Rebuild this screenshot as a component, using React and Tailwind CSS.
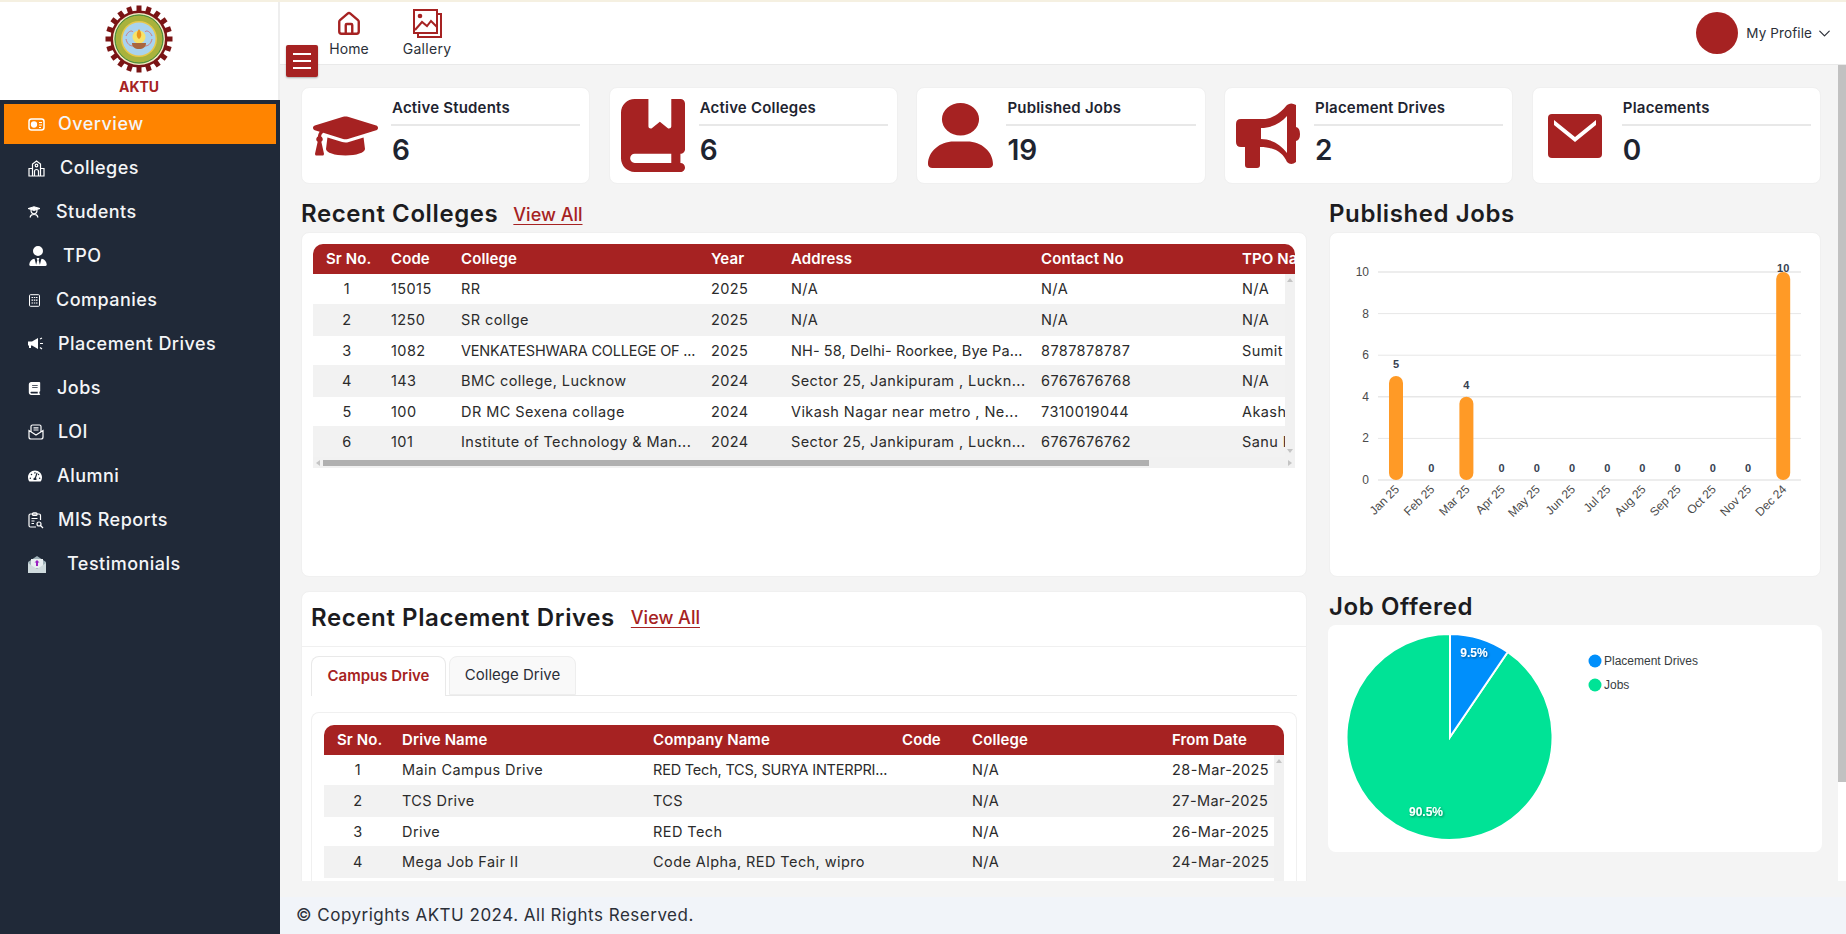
import React from "react";
import { FaGraduationCap, FaTachometerAlt } from "react-icons/fa";
import { FaBookBookmark, FaUser, FaUserTie, FaBook } from "react-icons/fa6";
import { ChevronDown, House } from "lucide-react";

const Logo = () => {
  const teeth = Array.from({ length: 20 }, (_, i) => i * 18);
  return (
    <svg width="68" height="68" viewBox="-34 -34 68 68">
      {teeth.map((a) => (
        <rect key={a} x="-2.500" y="-33.500" width="5" height="7" fill="#7a1414" transform={`rotate(${a})`} />
      ))}
      <circle r="28.500" fill="#7a1414" />
      <circle r="26" fill="#efe9c8" />
      <circle r="24.500" fill="#a9b23c" />
      <circle r="24" fill="none" stroke="#3f8a3f" strokeWidth="1" />
      <circle r="18" fill="#e8c84a" />
      <circle r="16.500" fill="#a9d3ee" />
      <path d="M-13 -3c2-5 6-6 7-4M13 -3c-2-5-6-6-7-4M-13 0c1 5 4 7 7 7M13 0c-1 5-4 7-7 7" stroke="#d07a7a" fill="none" strokeWidth="1" />
      <circle cy="-2" r="6.500" fill="#f7e36a" />
      <path d="M0 -10c3 4 3 8 0 10c-3-2-3-6 0-10z" fill="#e8941c" />
      <path d="M-7 4h14c0 4-3 6-7 6s-7-2-7-6z" fill="#a9663d" />
    </svg>
  );
};

const IdIcon = () => (
  <svg width="17" height="13" viewBox="0 0 17 13" fill="none" stroke="white" strokeWidth="1.5">
    <rect x="1" y="1" width="15" height="11" rx="2.500" />
    <circle cx="6" cy="6.500" r="2.400" fill="white" />
    <path d="M11 4.500h3M11 7h3M11 9.500h2" strokeWidth="1.200" />
  </svg>
);
const SchoolIcon = () => (
  <svg width="17" height="17" viewBox="0 0 17 17" fill="none" stroke="white" strokeWidth="1.200">
    <path d="M1 16V8.500h3.500V4L8.500 1l4 3v4.500H16V16z" />
    <circle cx="8.500" cy="5.500" r="1.300" />
    <path d="M6.500 16v-4.500a2 2 0 0 1 4 0V16M4.500 8.500V16M12.500 8.500V16" />
  </svg>
);
const StudentIcon = () => (
  <svg width="12" height="12" viewBox="0 0 12 12" fill="none" stroke="white" strokeWidth="1.200">
    <path d="M0.500 2.500L6 0.800l5.500 1.700L6 4.300z" fill="white" />
    <path d="M3 4c0 5 6 5 6 0M2 11.500c1-3 2-3 4-3s3 0 4 3" />
  </svg>
);
const CompanyIcon = () => (
  <svg width="13" height="13" viewBox="0 0 13 13" fill="none" stroke="white" strokeWidth="1">
    <rect x="1.500" y="0.700" width="10" height="11.600" rx="1" />
    <path d="M3.500 3.500h1.500M5.800 3.500h1.500M8 3.500h1.500M3.500 6.200h1.500M5.800 6.200h1.500M8 6.200h1.500M3.500 9h1.500M5.800 9h1.500M8 9h1.500" strokeWidth="1.200" />
  </svg>
);
const MegaSmall = () => (
  <svg width="18" height="14" viewBox="0 0 18 14" fill="white">
    <path d="M0 4.500h4L10 1v11L4 8.500H3V11H1V8.500H0z" />
    <path d="M12 2l2-1M12 6.500h3M12 10.500l2 1.500" stroke="white" strokeWidth="1.200" />
  </svg>
);
const LoiIcon = () => (
  <svg width="16" height="16" viewBox="0 0 16 16" fill="none" stroke="white" strokeWidth="1.200">
    <path d="M1 6.500V13a2 2 0 0 0 2 2h10a2 2 0 0 0 2-2V6.500L8 11z" />
    <path d="M3 8V2.500A1.500 1.500 0 0 1 4.500 1h7A1.500 1.500 0 0 1 13 2.500V8" />
    <path d="M5.500 3.800h5M5.500 6h5" />
  </svg>
);
const MisIcon = () => (
  <svg width="16" height="17" viewBox="0 0 16 17" fill="none" stroke="white" strokeWidth="1.200">
    <path d="M8 15H2.500A1.500 1.500 0 0 1 1 13.500v-10A1.500 1.500 0 0 1 2.500 2H11a1.500 1.500 0 0 1 1.500 1.500V8" />
    <rect x="4.500" y="0.800" width="4.500" height="2.600" rx="1" />
    <path d="M3.500 6.500h6M3.500 9h3M3.500 11.500h2.500" />
    <circle cx="11" cy="12" r="2" />
    <path d="M12.500 13.500l2.500 2.500" />
  </svg>
);
const TestiIcon = () => (
  <svg width="18" height="17" viewBox="0 0 18 17">
    <path d="M0 6L9 0l9 6v11H0z" fill="#9fb1b8" />
    <rect x="3" y="3" width="12" height="9" fill="#e8eef0" />
    <path d="M9 4l2.500 2.500H10V10H8V6.500H6.500z" fill="#9b1fc1" />
    <path d="M0 7l9 6 9-6v10H0z" fill="#cfdadd" />
  </svg>
);

const Gallery = () => (
  <svg width="29" height="29" viewBox="0 0 29 29" fill="none" stroke="#a62222" strokeWidth="2">
    <rect x="1" y="1" width="23" height="23" />
    <path d="M5 25v3h23V5h-3" />
    <circle cx="7" cy="7" r="2.300" fill="#a62222" stroke="none" />
    <path d="M2 21l7-8 5 4 4-5 6 6" />
  </svg>
);

const Bullhorn = () => (
  <svg width="64" height="65" viewBox="0 0 64 65" fill="#a62222">
    <path fillRule="evenodd" d="M5 16H27C38 16 46 8 51 2Q55-1 60 2V59Q55 63 51 59C47 50 39 44 24 44V62Q24 65 21 65H12Q9 65 9 62V44H5Q0 44 0 39V21Q0 16 5 16ZM25 25V36C36 36 45 42 51 50V13C45 20 36 25 25 25Z" />
    <path d="M60 24Q64 25 64 31Q64 37 60 38Z" />
  </svg>
);

const Envelope = () => (
  <svg width="54" height="44" viewBox="0 0 54 44">
    <rect width="54" height="44" rx="4" fill="#a62222" />
    <path d="M6 6L27 23L48 6V11L27 28L6 11Z" fill="white" />
  </svg>
);

const nav = [
  { label: "Overview", icon: <IdIcon />, text: "ml-[13px]", active: true },
  { label: "Colleges", icon: <SchoolIcon />, text: "ml-[15px]" },
  { label: "Students", icon: <StudentIcon />, text: "ml-[16px]" },
  { label: "TPO", icon: <FaUserTie size={20} color="white" />, text: "ml-[15px]" },
  { label: "Companies", icon: <CompanyIcon />, text: "ml-[15px]" },
  { label: "Placement Drives", icon: <MegaSmall />, text: "ml-[12px]" },
  { label: "Jobs", icon: <FaBook size={13} color="white" />, text: "ml-[16px]" },
  { label: "LOI", icon: <LoiIcon />, text: "ml-[14px]" },
  { label: "Alumni", icon: <FaTachometerAlt size={14} color="white" />, text: "ml-[15px]" },
  { label: "MIS Reports", icon: <MisIcon />, text: "ml-[14px]" },
  { label: "Testimonials", icon: <TestiIcon />, text: "ml-[21px]" },
];

const stats = [
  { label: "Active Students", value: "6", icon: <FaGraduationCap color="#a62222" preserveAspectRatio="none" className="h-[52px] w-[65px]" />, box: "w-[89px] pl-[11px]" },
  { label: "Active Colleges", value: "6", icon: <FaBookBookmark color="#a62222" preserveAspectRatio="none" className="h-[73px] w-[64px]" />, box: "w-[89px] pl-[11px]" },
  { label: "Published Jobs", value: "19", icon: <FaUser color="#a62222" preserveAspectRatio="none" className="h-[65px] w-[65px]" />, box: "w-[89px] pl-[11px]" },
  { label: "Placement Drives", value: "2", icon: <Bullhorn />, box: "w-[89px] pl-[11px]" },
  { label: "Placements", value: "0", icon: <Envelope />, box: "w-[89px] pl-[15px]" },
];

const colleges = [
  ["1", "15015", "RR", "2025", "N/A", "N/A", "N/A"],
  ["2", "1250", "SR collge", "2025", "N/A", "N/A", "N/A"],
  ["3", "1082", "VENKATESHWARA COLLEGE OF ...", "2025", "NH- 58, Delhi- Roorkee, Bye Pa...", "8787878787", "Sumit"],
  ["4", "143", "BMC college, Lucknow", "2024", "Sector 25, Jankipuram , Luckn...", "6767676768", "N/A"],
  ["5", "100", "DR MC Sexena collage", "2024", "Vikash Nagar near metro , Ne...", "7310019044", "Akash"],
  ["6", "101", "Institute of Technology & Man...", "2024", "Sector 25, Jankipuram , Luckn...", "6767676762", "Sanu Kumar"],
];

const drives = [
  ["1", "Main Campus Drive", "RED Tech, TCS, SURYA INTERPRI...", "", "N/A", "28-Mar-2025"],
  ["2", "TCS Drive", "TCS", "", "N/A", "27-Mar-2025"],
  ["3", "Drive", "RED Tech", "", "N/A", "26-Mar-2025"],
  ["4", "Mega Job Fair II", "Code Alpha, RED Tech, wipro", "", "N/A", "24-Mar-2025"],
];

const rowH = [
  "h-[30px]",
  "h-[32px] bg-[#f2f2f2]",
  "h-[29px] [&>td]:pt-[1px]",
  "h-[32px] bg-[#f2f2f2]",
  "h-[29px] [&>td]:pt-[1px]",
  "h-[31px] bg-[#f2f2f2]",
];

const trackingFor = (c) => {
  if (c.startsWith("VENKATESHWARA") || c.startsWith("RED Tech, TCS")) return "tracking-[-0.2px]";
  if (c.startsWith("NH- 58")) return "tracking-[0.1px]";
  return "tracking-[0.42px]";
};

const DataTable = ({ cols, head, rows, width }) => (
  <table className={`table-fixed border-collapse ${width}`}>
    <colgroup>
      {cols.map((c, i) => (
        <col key={i} className={c} />
      ))}
    </colgroup>
    <thead>
      <tr className="h-[30px] bg-[#a62222] text-white">
        {head.map((h, i) => (
          <th key={i} className="overflow-hidden whitespace-nowrap pl-[13px] text-left text-[15px] font-semibold tracking-[0.1px]">
            {h}
          </th>
        ))}
      </tr>
    </thead>
    <tbody>
      {rows.map((r, ri) => (
        <tr key={ri} className={rowH[ri]}>
          {r.map((c, i) => (
            <td
              key={i}
              className={`overflow-hidden whitespace-nowrap text-[14.500px] font-normal text-[#2b2b2b] ${trackingFor(c)} ${i === 0 ? "pl-[3px] text-center" : "pl-[13px]"}`}
            >
              {c}
            </td>
          ))}
        </tr>
      ))}
    </tbody>
  </table>
);

const Up = () => (
  <svg width="6" height="4" viewBox="0 0 6 4"><path d="M3 0l3 4H0z" fill="#c4c4c4" /></svg>
);
const Down = () => (
  <svg width="6" height="4" viewBox="0 0 6 4"><path d="M3 4L0 0h6z" fill="#c4c4c4" /></svg>
);

const months = ["Jan 25", "Feb 25", "Mar 25", "Apr 25", "May 25", "Jun 25", "Jul 25", "Aug 25", "Sep 25", "Oct 25", "Nov 25", "Dec 24"];
const values = [5, 0, 4, 0, 0, 0, 0, 0, 0, 0, 0, 10];

const BarChart = () => (
  <svg width="492" height="345" viewBox="0 0 492 345" className="font-['Liberation_Sans',sans-serif]">
    {[0, 2, 4, 6, 8, 10].map((v) => {
      const y = 247 - v * 20.8;
      return (
        <g key={v}>
          <line x1="48" x2="471" y1={y} y2={y} stroke="#e7e7e7" strokeWidth={v === 0 || v === 10 || v === 4 ? 1.5 : 1} />
          <text x="39" y={y + 4} textAnchor="end" fontSize="12" fill="#4b4b4b">{v}</text>
        </g>
      );
    })}
    {values.map((v, i) => {
      const x = 66 + i * 35.2;
      const h = v * 20.8;
      return (
        <g key={i}>
          {v > 0 && <rect x={x - 7} y={247 - h} width="14" height={h} rx="7" fill="#ff9a26" />}
          <text x={x} y={v > 0 ? 247 - h - (v === 10 ? 0 : 8) : 239} textAnchor="middle" fontSize="11" fontWeight="700" fill="#374151">{v}</text>
          <text textAnchor="end" fontSize="12" fill="#4b4b4b" transform={`translate(${x + 4} 257) rotate(-45)`}>{months[i]}</text>
        </g>
      );
    })}
  </svg>
);

const PieChart = () => (
  <svg width="494" height="227" viewBox="0 0 494 227" className="font-['Liberation_Sans',sans-serif]">
    <defs>
      <filter id="ts" x="-20%" y="-20%" width="140%" height="140%">
        <feDropShadow dx="1" dy="1" stdDeviation="1" floodColor="#000" floodOpacity="0.45" />
      </filter>
    </defs>
    <g transform="translate(122 112)">
      <path d="M0 0L57.700 -85A103 103 0 1 1 0 -103Z" fill="#00e396" stroke="white" strokeWidth="2" />
      <path d="M0 0V-103A103 103 0 0 1 57.700 -85Z" fill="#008ffb" stroke="white" strokeWidth="2" />
    </g>
    <text x="146" y="32" textAnchor="middle" fontSize="12" fontWeight="700" fill="white" filter="url(#ts)">9.5%</text>
    <text x="98" y="191" textAnchor="middle" fontSize="12" fontWeight="700" fill="white" filter="url(#ts)">90.5%</text>
    <circle cx="267" cy="36" r="6.500" fill="#008ffb" />
    <text x="276" y="40" fontSize="12" fill="#373d3f">Placement Drives</text>
    <circle cx="267" cy="60" r="6.500" fill="#00e396" />
    <text x="276" y="64" fontSize="12" fill="#373d3f">Jobs</text>
  </svg>
);

const headingCls = "text-[24px] font-semibold tracking-[0.6px] text-[#1c1c1f]";

export default function App() {
  return (
    <div className="flex h-screen w-full flex-col overflow-hidden bg-[#f4f4f4] font-['Inter',sans-serif]">
      <div className="h-[2px] shrink-0 bg-[#f5f0e1]" />
      <div className="flex min-h-0 flex-1">
        <aside className="flex w-[280px] shrink-0 flex-col bg-[#202938]">
          <div className="flex h-[98px] shrink-0 flex-col items-center border-r-2 border-[#eeeeee] bg-white pt-[3px]">
            <Logo />
            <div className="mt-[4px] text-[14px] font-bold leading-[20px] text-[#a62222]">AKTU</div>
          </div>
          <nav className="flex flex-col pt-[4px]">
            {nav.map((n) => (
              <div
                key={n.label}
                className={`flex items-center ${n.active ? "mx-[4px] mb-[2px] h-[40px] bg-[#ff8400] pl-[24px]" : "h-[44px] pl-[28px]"}`}
              >
                <span className="flex shrink-0 items-center justify-start">{n.icon}</span>
                <span className={`pb-[2px] text-[18px] font-medium tracking-[0.48px] text-[#f4f5f7] ${n.text}`}>{n.label}</span>
              </div>
            ))}
          </nav>
        </aside>

        <div className="relative flex min-w-0 flex-1 flex-col">
          <header className="flex h-[63px] shrink-0 items-start border-b border-[#e9e9e9] bg-white pl-[46px] pr-[12px]">
            <div className="flex w-[46px] flex-col items-center pt-[9px]">
              <House size={26} color="#a62222" strokeWidth={2.2} />
              <span className="mt-[2px] text-[14px] leading-[20px] tracking-[0.1px] text-[#2b2f38]">Home</span>
            </div>
            <div className="ml-[30px] flex w-[50px] flex-col items-center pt-[7px]">
              <Gallery />
              <span className="mt-[1px] text-[14px] leading-[20px] tracking-[0.3px] text-[#2b2f38]">Gallery</span>
            </div>
            <div className="ml-auto flex items-center self-center">
              <div className="h-[42px] w-[42px] rounded-full bg-[#a62222]" />
              <span className="ml-[8px] text-[13.500px] tracking-[0.1px] text-[#2b2f38]">My Profile</span>
              <ChevronDown size={19} strokeWidth={1.5} color="#2b2f38" className="ml-[3px]" />
            </div>
          </header>

          <button className="absolute left-[6px] top-[43px] z-10 flex h-[32px] w-[32px] flex-col items-center justify-center gap-[5px] rounded-[2px] bg-[#a62222] shadow-[0_1px_2px_rgba(0,0,0,0.3)]">
            <span className="h-[2px] w-[18px] bg-white" />
            <span className="h-[2px] w-[18px] bg-white" />
            <span className="h-[2px] w-[18px] bg-white" />
          </button>

          <div className="flex h-[816px] shrink-0">
            <main className="min-w-0 flex-1 overflow-hidden pl-[21px] pr-[17px] pt-[22px]">
              <div className="flex gap-[18.500px]">
                {stats.map((s) => (
                  <div key={s.label} className="flex h-[97px] flex-1 items-start rounded-[8px] border border-[#f0f0f0] bg-white">
                    <div className={`flex shrink-0 items-center self-center ${s.box}`}>{s.icon}</div>
                    <div className="min-w-0 flex-1 pr-[9px] pt-[10px]">
                      <div className="whitespace-nowrap border-b-2 border-[#e8e8e8] pb-[6px] pl-[1px] text-[15px] font-semibold leading-[20px] tracking-[0.2px] text-[#1e2430]">
                        {s.label}
                      </div>
                      <div className="mt-[5px] pl-[1px] text-[28px] font-semibold leading-[38px] text-[#1e2430]">{s.value}</div>
                    </div>
                  </div>
                ))}
              </div>

              <div className="mt-[12px] flex gap-[22px]">
                <div className="w-[1006px] shrink-0">
                  <div className="flex h-[36px] items-center">
                    <h2 className={headingCls}>Recent Colleges</h2>
                    <a className="ml-[15px] text-[18px] font-medium text-[#a62222] underline underline-offset-[3px]">View All</a>
                  </div>
                  <div className="h-[345px] rounded-[8px] border border-[#f0f0f0] bg-white px-[11px] pt-[11px]">
                    <div className="relative h-[224px] overflow-hidden rounded-t-[10px]">
                      <DataTable
                        width="w-[1130px]"
                        cols={["w-[65px]", "w-[70px]", "w-[250px]", "w-[80px]", "w-[250px]", "w-[201px]", "w-[214px]"]}
                        head={["Sr No.", "Code", "College", "Year", "Address", "Contact No", "TPO Name"]}
                        rows={colleges}
                      />
                      <div className="absolute right-0 top-[30px] flex h-[183px] w-[10px] flex-col items-center justify-between bg-[#f1f1f1] py-[4px]">
                        <Up />
                        <Down />
                      </div>
                      <div className="absolute bottom-0 left-0 flex h-[11px] w-full items-center justify-between bg-[#f1f1f1] px-[3px]">
                        <svg width="4" height="6" viewBox="0 0 4 6"><path d="M0 3l4-3v6z" fill="#c4c4c4" /></svg>
                        <div className="ml-[3px] mr-auto h-[6px] w-[826px] bg-[#b0b0b0]" />
                        <svg width="4" height="6" viewBox="0 0 4 6"><path d="M4 3L0 0v6z" fill="#c4c4c4" /></svg>
                      </div>
                    </div>
                  </div>

                  <div className="mt-[14px] h-[320px] rounded-t-[8px] border border-[#f0f0f0] bg-white">
                    <div className="flex h-[55px] items-center border-b border-[#f0f0f0] pb-[3px] pl-[9px]">
                      <h2 className={headingCls}>Recent Placement Drives</h2>
                      <a className="ml-[16px] text-[18px] font-medium text-[#a62222] underline underline-offset-[3px]">View All</a>
                    </div>
                    <div className="px-[9px] pt-[9px]">
                      <div className="flex h-[40px] gap-[3px] border-b border-[#e9e9e9]">
                        <div className="-mb-px flex w-[135px] items-center justify-center rounded-t-[8px] border border-b-0 border-[#e9e9e9] bg-white text-[15px] font-semibold text-[#a62222]">
                          Campus Drive
                        </div>
                        <div className="flex w-[127px] items-center justify-center rounded-t-[8px] border border-[#eeeeee] bg-[#f9f9f9] text-[15px] text-[#2b2f38]">
                          College Drive
                        </div>
                      </div>
                      <div className="mt-[16px] h-[180px] rounded-t-[8px] border border-b-0 border-[#f0f0f0] px-[12px] pt-[12px]">
                        <div className="relative h-[168px] overflow-hidden rounded-t-[10px]">
                          <DataTable
                            width="w-[960px]"
                            cols={["w-[65px]", "w-[251px]", "w-[249px]", "w-[70px]", "w-[200px]", "w-[125px]"]}
                            head={["Sr No.", "Drive Name", "Company Name", "Code", "College", "From Date"]}
                            rows={drives}
                          />
                          <div className="absolute right-0 top-[30px] flex h-[170px] w-[10px] flex-col items-center bg-[#f1f1f1] py-[4px]">
                            <Up />
                          </div>
                        </div>
                      </div>
                    </div>
                  </div>
                </div>

                <div className="w-[492px] shrink-0">
                  <h2 className={`flex h-[36px] items-center ${headingCls}`}>Published Jobs</h2>
                  <div className="h-[345px] overflow-hidden rounded-[8px] border border-[#f0f0f0] bg-white">
                    <BarChart />
                  </div>
                  <h2 className={`mb-[2px] mt-[13px] flex h-[33px] items-center ${headingCls}`}>Job Offered</h2>
                  <div className="-ml-[1px] h-[227px] w-[494px] overflow-hidden rounded-[8px] bg-white">
                    <PieChart />
                  </div>
                </div>
              </div>
            </main>
            <div className="w-[8px] shrink-0 bg-white">
              <div className="h-[717px] bg-[#c1c1c1]" />
            </div>
          </div>

          <div className="h-[16px] shrink-0" />
          <footer className="flex h-[37px] shrink-0 items-center bg-[#f1f4f9] pl-[16px] text-[17px] tracking-[0.5px] text-[#2b2f38]">
            © Copyrights AKTU 2024. All Rights Reserved.
          </footer>
        </div>
      </div>
    </div>
  );
}
